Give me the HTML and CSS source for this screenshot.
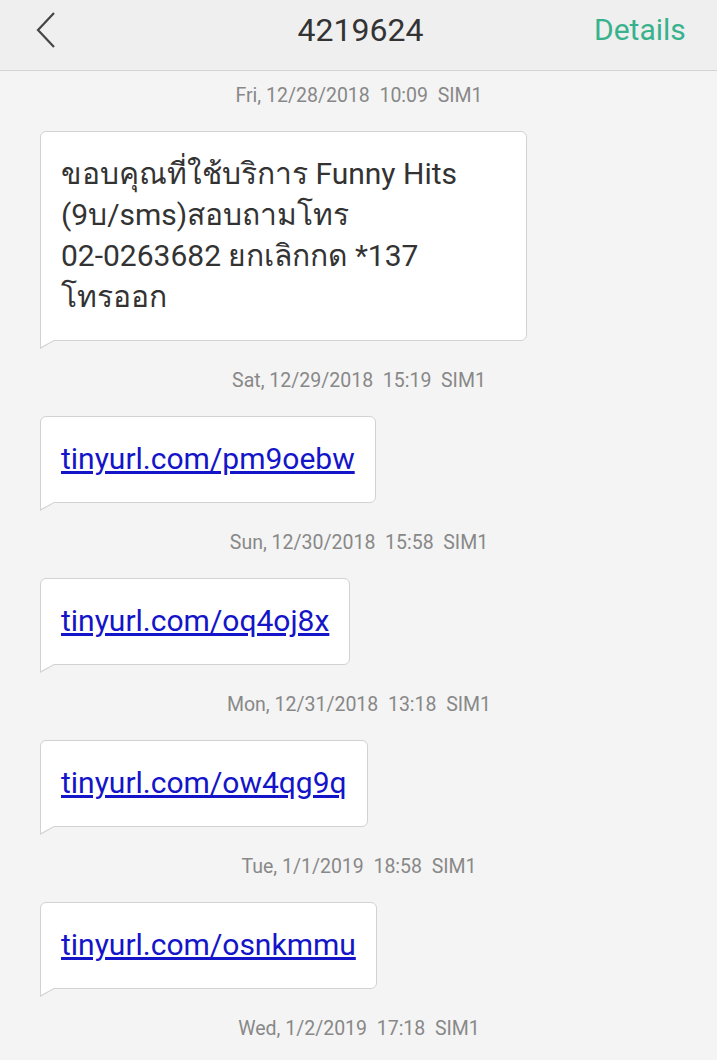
FILE: index.html
```html
<!DOCTYPE html>
<html lang="en">
<head>
<meta charset="UTF-8">
<meta name="viewport" content="width=device-width, initial-scale=1.0">
<title>4219624</title>
<link rel="stylesheet" href="styles.css">
</head>
<body>
<div class="header">
  <span class="back">
    <svg width="22" height="38" viewBox="0 0 22 38"><polyline points="19,2 3,19 19,36" fill="none" stroke="#444" stroke-width="2.2"/></svg>
  </span>
  <span class="title">4219624</span>
  <span class="details">Details</span>
</div>

<div class="thread">
  <div class="stamp">Fri, 12/28/2018  10:09  SIM1</div>
  <div class="bubble wide">ขอบคุณที่ใช้บริการ Funny Hits<br>(9บ/sms)สอบถามโทร<br>02-0263682 ยกเลิกกด *137<br>โทรออก</div>

  <div class="stamp">Sat, 12/29/2018  15:19  SIM1</div>
  <div class="bubble"><a href="#">tinyurl.com/pm9oebw</a></div>

  <div class="stamp">Sun, 12/30/2018  15:58  SIM1</div>
  <div class="bubble"><a href="#">tinyurl.com/oq4oj8x</a></div>

  <div class="stamp">Mon, 12/31/2018  13:18  SIM1</div>
  <div class="bubble"><a href="#">tinyurl.com/ow4qg9q</a></div>

  <div class="stamp">Tue, 1/1/2019  18:58  SIM1</div>
  <div class="bubble"><a href="#">tinyurl.com/osnkmmu</a></div>

  <div class="stamp">Wed, 1/2/2019  17:18  SIM1</div>
</div>
</body>
</html>
```

FILE: styles.css
```css
body {
  margin: 0;
  padding: 0;
  font-family: Roboto, "Noto Sans", sans-serif;
  background-color: #f4f4f4;
  height: 1060px;
  overflow: hidden;
}

.header {
  height: 71px;
  box-sizing: border-box;
  background-color: #efefef;
  border-bottom: 1px solid #d4d4d4;
  display: flex;
  align-items: flex-start;
  justify-content: space-between;
  padding: 0 33px 0 35px;
  line-height: 60px;
}

.back {
  width: 90px;
  height: 60px;
  display: flex;
  align-items: center;
}

.title {
  font-size: 32px;
  color: #333333;
  margin-left: 2px;
}

.details {
  width: 90px;
  text-align: right;
  font-size: 30px;
  color: #37b28c;
}

.thread {
  display: flex;
  flex-direction: column;
  align-items: flex-start;
  padding: 13px 40px 0 40px;
}

.stamp {
  align-self: center;
  white-space: pre;
  font-size: 19.5px;
  line-height: 24px;
  color: #888888;
  margin-bottom: 23px;
  margin-left: 1px;
}

.bubble {
  position: relative;
  max-width: 445px;
  padding: 21px 20px 23px 20px;
  background-color: #ffffff;
  border: 1px solid #d2d2d2;
  border-radius: 6px 6px 6px 0;
  font-size: 30px;
  line-height: 41px;
  color: #333333;
  margin-bottom: 28px;
}

.bubble.wide {
  width: 445px;
}

/* small tail at bottom left */
.bubble::before {
  content: "";
  position: absolute;
  left: -1px;
  bottom: -9px;
  border-left: 16px solid #d2d2d2;
  border-bottom: 9px solid transparent;
}

.bubble::after {
  content: "";
  position: absolute;
  left: 0;
  bottom: -7px;
  border-left: 13px solid #ffffff;
  border-bottom: 7px solid transparent;
}

.bubble a {
  color: #1414c8;
  text-decoration: underline;
}
```
